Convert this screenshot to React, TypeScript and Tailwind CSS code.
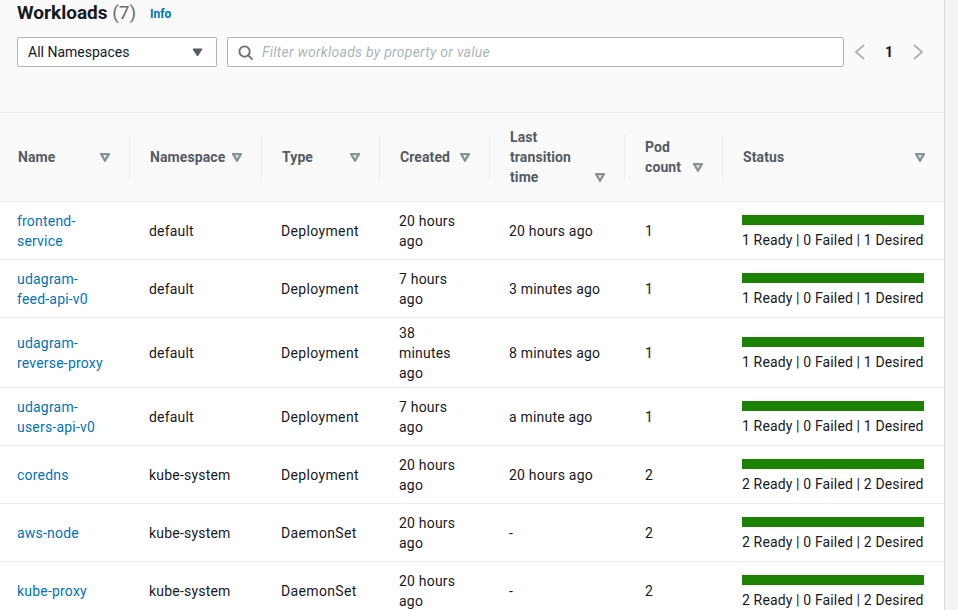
import React from 'react'

const font = '[font-family:Roboto,"Noto_Sans",sans-serif]'

const rows = [
  { name: 'frontend-service', ns: 'default', type: 'Deployment', created: '20 hours ago', last: '20 hours ago', pods: 1, status: '1 Ready | 0 Failed | 1 Desired' },
  { name: 'udagram-feed-api-v0', ns: 'default', type: 'Deployment', created: '7 hours ago', last: '3 minutes ago', pods: 1, status: '1 Ready | 0 Failed | 1 Desired' },
  { name: 'udagram-reverse-proxy', ns: 'default', type: 'Deployment', created: '38 minutes ago', last: '8 minutes ago', pods: 1, status: '1 Ready | 0 Failed | 1 Desired' },
  { name: 'udagram-users-api-v0', ns: 'default', type: 'Deployment', created: '7 hours ago', last: 'a minute ago', pods: 1, status: '1 Ready | 0 Failed | 1 Desired' },
  { name: 'coredns', ns: 'kube-system', type: 'Deployment', created: '20 hours ago', last: '20 hours ago', pods: 2, status: '2 Ready | 0 Failed | 2 Desired' },
  { name: 'aws-node', ns: 'kube-system', type: 'DaemonSet', created: '20 hours ago', last: '-', pods: 2, status: '2 Ready | 0 Failed | 2 Desired' },
  { name: 'kube-proxy', ns: 'kube-system', type: 'DaemonSet', created: '20 hours ago', last: '-', pods: 2, status: '2 Ready | 0 Failed | 2 Desired' },
]

const SortIcon = () => (
  <svg width="10" height="9" viewBox="0 0 10 9" className="shrink-0 mb-[5px]">
    <path d="M1.2 1.1h7.6L5 7.6z" fill="none" stroke="#879596" strokeWidth="2.4" strokeLinejoin="miter" />
  </svg>
)

const HeaderCell = ({ label, width, pl, last }: { label: React.ReactNode; width: string; pl: string; last?: boolean }) => (
  <th className={`${width} border-b border-[#eaeded] p-0 font-bold text-left align-middle`}>
    <div className={`flex h-11 items-center ${last ? '' : 'border-r border-[#eaeded]'}`}>
      <div className={`flex w-full items-end justify-between ${pl} pr-[19px] tracking-[0.1px]`}>
        <span>{label}</span>
        <SortIcon />
      </div>
    </div>
  </th>
)

export default function App() {
  return (
    <div className={`flex h-[610px] w-[958px] overflow-hidden bg-[#f2f3f3] text-sm leading-5 text-[#16191f] ${font}`}>
      <div className="w-[944px] shrink-0 bg-[#fafafa]">
        <div className="h-[112px] pl-[17px] pr-5">
          <div className="flex h-[37px] items-start">
            <h1 className="pt-[2px] text-[19px] leading-[22px] font-bold">
              Workloads <span className="font-normal text-[#687078]">(7)</span>
            </h1>
            <a className="ml-[14px] mt-[4px] text-xs leading-5 font-bold text-[#0073bb]">Info</a>
          </div>
          <div className="flex items-center">
            <div className="flex h-[30px] w-[200px] shrink-0 items-center justify-between rounded-[2px] border border-[#aab7b8] bg-white pl-[10px] pr-[13px]">
              <span>All Namespaces</span>
              <svg width="11" height="9" viewBox="0 0 11 9">
                <path d="M1 1h9L5.5 8z" fill="#545b64" stroke="#545b64" />
              </svg>
            </div>
            <div className="ml-[10px] flex h-[30px] w-[617px] shrink-0 items-center rounded-[2px] border border-[#aab7b8] bg-white pl-[10px]">
              <svg width="15" height="15" viewBox="0 0 16 16" fill="none" stroke="#687078" strokeWidth="2">
                <circle cx="7" cy="7" r="5.5" />
                <path d="M11 11l4.5 4.5" />
              </svg>
              <span className="ml-[9px] italic tracking-[0.25px] text-[#aab7b8]">Filter workloads by property or value</span>
            </div>
            <div className="ml-[10px] flex shrink-0 items-center">
              <svg width="12" height="16" viewBox="0 0 12 16" fill="none" stroke="#aab7b8" strokeWidth="2">
                <path d="M10 1L2 8l8 7" />
              </svg>
              <span className="ml-[18px] w-[10px] text-center font-bold">1</span>
              <svg className="ml-[18px]" width="12" height="16" viewBox="0 0 12 16" fill="none" stroke="#aab7b8" strokeWidth="2">
                <path d="M2 1l8 7-8 7" />
              </svg>
            </div>
          </div>
        </div>

        <table className="w-[944px] table-fixed border-separate border-spacing-0 border-t border-[#eaeded] bg-white">
          <thead className="bg-[#fafafa] text-[#545b64]">
            <tr className="h-[89px]">
              <HeaderCell label="Name" width="w-[130px]" pl="pl-[18px]" />
              <HeaderCell label="Namespace" width="w-[132px]" pl="pl-5" />
              <HeaderCell label="Type" width="w-[118px]" pl="pl-5" />
              <HeaderCell label="Created" width="w-[110px]" pl="pl-5" />
              <HeaderCell label={<>Last<br />transition<br />time</>} width="w-[135px]" pl="pl-5" />
              <HeaderCell label={<>Pod<br />count</>} width="w-[98px]" pl="pl-5" />
              <HeaderCell label="Status" width="w-[221px]" pl="pl-5" last />
            </tr>
          </thead>
          <tbody className="tracking-[0.2px]">
            {rows.map((row) => (
              <tr key={row.name}>
                <td className="border-b border-[#eaeded] pl-[17px] pr-[23px] pt-[5px] pb-1 align-middle text-[#0073bb]">{row.name}</td>
                <td className="border-b border-[#eaeded] pl-[19px] pr-5 pt-[5px] pb-1 align-middle">{row.ns}</td>
                <td className="border-b border-[#eaeded] pl-[19px] pr-5 pt-[5px] pb-1 align-middle tracking-[0.35px]">{row.type}</td>
                <td className="border-b border-[#eaeded] pl-[19px] pr-[24px] pt-[5px] pb-1 align-middle">{row.created}</td>
                <td className="border-b border-[#eaeded] pl-[19px] pr-5 pt-[5px] pb-1 align-middle">{row.last}</td>
                <td className="border-b border-[#eaeded] pl-5 pr-5 pt-[5px] pb-1 align-middle">{row.pods}</td>
                <td className="border-b border-[#eaeded] pl-[19px] pr-5 pt-[13px] pb-[9px] align-middle">
                  <div className="h-[10px] w-[182px] bg-[#1d8102]" />
                  <div className="mt-[5px] whitespace-nowrap tracking-[0.14px]">{row.status}</div>
                </td>
              </tr>
            ))}
          </tbody>
        </table>
      </div>
      <div className="flex-1 border-l border-[#d5dbdb]" />
    </div>
  )
}
